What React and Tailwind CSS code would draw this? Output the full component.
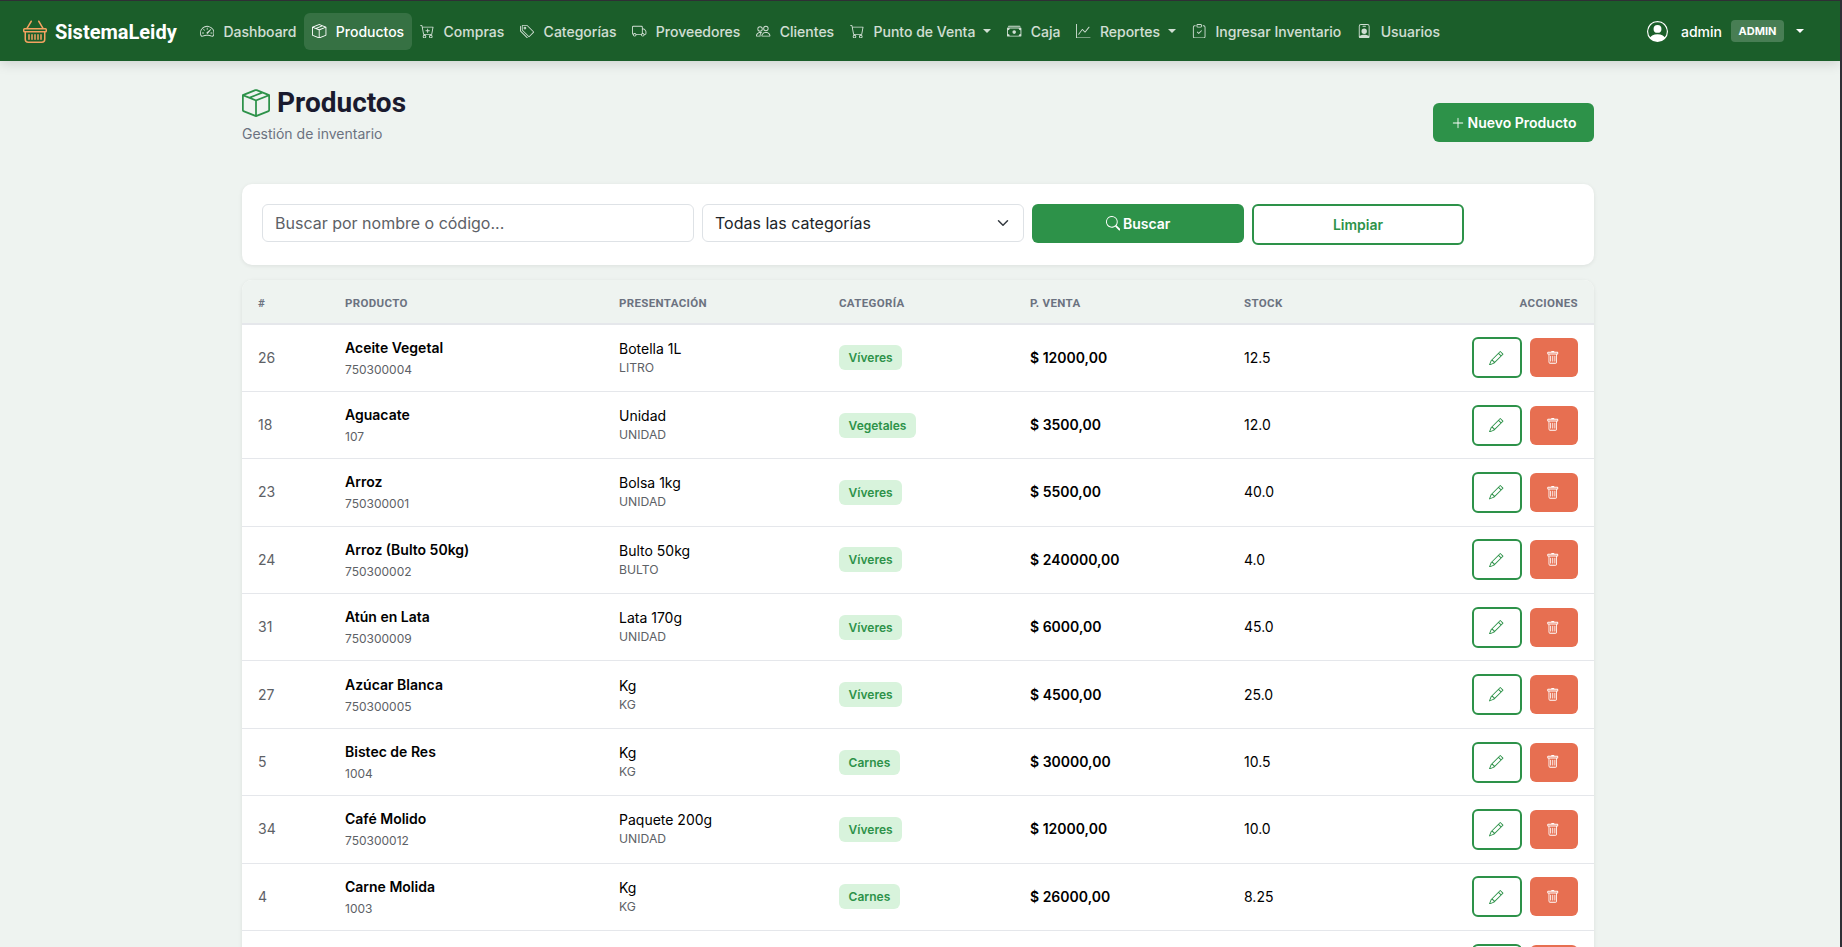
import React, { useState } from "react";
import {
  BsBasket,
  BsBoxSeam,
  BsCart,
  BsCartPlus,
  BsCashStack,
  BsClipboardCheck,
  BsGraphUp,
  BsPencil,
  BsPeople,
  BsPersonBadge,
  BsPersonCircle,
  BsPlusLg,
  BsSearch,
  BsSpeedometer2,
  BsTags,
  BsTrash,
  BsTruck,
} from "react-icons/bs";

const links = [
  { name: "Dashboard", icon: BsSpeedometer2 },
  { name: "Productos", icon: BsBoxSeam, active: true },
  { name: "Compras", icon: BsCartPlus },
  { name: "Categorías", icon: BsTags },
  { name: "Proveedores", icon: BsTruck },
  { name: "Clientes", icon: BsPeople },
  { name: "Punto de Venta", icon: BsCart, menu: true },
  { name: "Caja", icon: BsCashStack },
  { name: "Reportes", icon: BsGraphUp, menu: true },
  { name: "Ingresar Inventario", icon: BsClipboardCheck },
  { name: "Usuarios", icon: BsPersonBadge },
];

const products = [
  { id: 26, name: "Aceite Vegetal", code: "750300004", pres: "Botella 1L", unit: "LITRO", category: "Víveres", price: "12000,00", stock: "12.5" },
  { id: 18, name: "Aguacate", code: "107", pres: "Unidad", unit: "UNIDAD", category: "Vegetales", price: "3500,00", stock: "12.0" },
  { id: 23, name: "Arroz", code: "750300001", pres: "Bolsa 1kg", unit: "UNIDAD", category: "Víveres", price: "5500,00", stock: "40.0" },
  { id: 24, name: "Arroz (Bulto 50kg)", code: "750300002", pres: "Bulto 50kg", unit: "BULTO", category: "Víveres", price: "240000,00", stock: "4.0" },
  { id: 31, name: "Atún en Lata", code: "750300009", pres: "Lata 170g", unit: "UNIDAD", category: "Víveres", price: "6000,00", stock: "45.0" },
  { id: 27, name: "Azúcar Blanca", code: "750300005", pres: "Kg", unit: "KG", category: "Víveres", price: "4500,00", stock: "25.0" },
  { id: 5, name: "Bistec de Res", code: "1004", pres: "Kg", unit: "KG", category: "Carnes", price: "30000,00", stock: "10.5" },
  { id: 34, name: "Café Molido", code: "750300012", pres: "Paquete 200g", unit: "UNIDAD", category: "Víveres", price: "12000,00", stock: "10.0" },
  { id: 4, name: "Carne Molida", code: "1003", pres: "Kg", unit: "KG", category: "Carnes", price: "26000,00", stock: "8.25" },
];

const Caret = () => (
  <span className="ml-2 inline-block border-x-[4.3px] border-t-[4.3px] border-x-transparent border-t-current"></span>
);

const Navbar = () => {
  return (
    <nav className="relative z-10 flex h-[60px] items-center bg-[#1b5e2a] pl-[23px] pr-9 shadow-[0_2px_12px_rgba(0,0,0,0.15)]">
      <a className="flex items-center gap-2 text-white">
        <BsBasket className="size-6 text-[#f4a261]" />
        <span className="w-[121px] whitespace-nowrap pt-0.5 font-['Roboto',sans-serif] text-[20px] font-bold leading-6">SistemaLeidy</span>
      </a>
      <ul className="ml-4 flex items-center text-sm font-medium text-white/80">
        {links.map((link) => (
          <li key={link.name}>
            <a
              className={
                link.active
                  ? "flex h-[37px] items-center whitespace-nowrap rounded-md bg-white/12 px-2 text-white"
                  : "flex h-[37px] items-center whitespace-nowrap px-2"
              }
            >
              <link.icon className="mr-[9px] size-[14.4px]" />
              <span className="pt-0.5">{link.name}</span>
              {link.menu && <Caret />}
            </a>
          </li>
        ))}
      </ul>
      <div className="ml-auto flex items-center text-sm font-medium text-white">
        <BsPersonCircle className="mr-[13px] size-[21px]" />
        <span className="pt-0.5">admin</span>
        <span className="ml-[9px] mr-1 w-[53px] rounded bg-white/20 py-[3px] text-center text-[11px] font-bold leading-4">ADMIN</span>
        <Caret />
      </div>
    </nav>
  );
};

const RowButtons = () => (
  <div className="flex items-center justify-end gap-2">
    <button className="flex h-[41px] w-[50px] items-center justify-center rounded-md border-2 border-[#2d9249] text-[#2d9249]">
      <BsPencil className="mr-px size-[14.4px]" />
    </button>
    <button className="flex h-[39px] w-12 items-center justify-center rounded-md bg-[#e76f51] text-white">
      <BsTrash className="mr-0.5 size-[13.5px]" />
    </button>
  </div>
);

const ProductRow = ({ product }) => {
  return (
    <tr className="h-[67.4px] border-b border-[#e5e7eb]">
      <td className="px-4 text-[#5d6166]">{product.id}</td>
      <td className="px-4 pt-px">
        <div className="font-semibold leading-[22px]">{product.name}</div>
        <div className="text-xs leading-[21px] text-[#5d6166]">{product.code}</div>
      </td>
      <td className="px-4">
        <div className="leading-[19px]">{product.pres}</div>
        <div className="text-[12.2px] leading-[19px] text-[#5d6166]">{product.unit}</div>
      </td>
      <td className="px-4">
        <span className="inline-block rounded-md bg-[#d8f3dc] px-[9.6px] text-xs font-semibold leading-[25px] text-[#2d9249]">
          {product.category}
        </span>
      </td>
      <td className="px-4 font-semibold">$ {product.price}</td>
      <td className="px-4">{product.stock}</td>
      <td className="px-4">
        <RowButtons />
      </td>
    </tr>
  );
};

const App = () => {
  const [search, setSearch] = useState("");

  return (
    <div className="h-[947px] overflow-hidden border-r-2 border-t border-[#2f2f35] bg-[#eef3f0] font-['Inter',sans-serif]">
      <Navbar />
      <main className="ml-[242px] w-[1352px] text-sm text-black">
        <div className="flex h-[123px] items-start justify-between">
          <div className="pt-6">
            <h1 className="flex items-center gap-2 font-['Roboto',sans-serif] text-[28px] font-bold leading-[34px] text-[#1a1a2e]">
              <BsBoxSeam className="size-7 text-[#2d9249]" />
              <span className="-ml-px pt-px">Productos</span>
            </h1>
            <p className="mt-[3px] leading-[22px] text-[#6b7280]">Gestión de inventario</p>
          </div>
          <button className="mt-[42px] flex h-[39px] w-[161px] items-center justify-center rounded-md bg-[#2d9249] font-semibold text-white">
            <BsPlusLg className="mr-[3px] size-[14px]" />
            Nuevo Producto
          </button>
        </div>

        <div className="mb-[15px] flex h-[81px] items-start gap-2 rounded-[10px] bg-white p-5 shadow-[0_1px_4px_rgba(0,0,0,0.08)]">
          <input
            type="text"
            value={search}
            onChange={(e) => setSearch(e.target.value)}
            placeholder="Buscar por nombre o código..."
            className="h-[38px] w-[432px] rounded-md border border-[#dee2e6] px-3 text-base placeholder:text-[#5d6166]"
          />
          <div className="flex h-[38px] w-[322px] items-center justify-between rounded-md border border-[#dee2e6] pl-3 pr-[14px] text-base text-[#212529]">
            Todas las categorías
            <svg viewBox="0 0 16 16" className="h-3 w-3" fill="none" stroke="#343a40" strokeWidth="2" strokeLinecap="round" strokeLinejoin="round">
              <path d="m2 5 6 6 6-6" />
            </svg>
          </div>
          <button className="flex h-[39px] w-[212px] items-center justify-center gap-[3px] rounded-md bg-[#2d9249] font-semibold text-white">
            <BsSearch className="size-[14.4px]" />
            Buscar
          </button>
          <button className="h-[41px] w-[212px] rounded-md border-2 border-[#2d9249] font-semibold text-[#2d9249]">
            Limpiar
          </button>
        </div>

        <div className="overflow-hidden rounded-t-[10px] bg-white shadow-[0_1px_4px_rgba(0,0,0,0.08)]">
          <table className="w-full table-fixed border-collapse text-left">
            <thead>
              <tr className="h-[44px] border-b-2 border-[#e5e7eb] bg-[#eef3f0] font-['Roboto',sans-serif] text-[11.5px] uppercase tracking-[0.35px] text-[#6b7280]">
                <th className="w-[87px] px-4 pt-[3px] font-bold">#</th>
                <th className="w-[274px] px-4 pt-[3px] font-bold">Producto</th>
                <th className="w-[220px] px-4 pt-[3px] font-bold">Presentación</th>
                <th className="w-[191px] px-4 pt-[3px] font-bold">Categoría</th>
                <th className="w-[214px] px-4 pt-[3px] font-bold">P. Venta</th>
                <th className="w-[150px] px-4 pt-[3px] font-bold">Stock</th>
                <th className="px-4 pt-[3px] text-right font-bold">Acciones</th>
              </tr>
            </thead>
            <tbody>
              {products.map((product) => (
                <ProductRow key={product.id} product={product} />
              ))}
              <tr className="h-[67.4px]">
                <td colSpan={7} className="px-4">
                  <RowButtons />
                </td>
              </tr>
            </tbody>
          </table>
        </div>
      </main>
    </div>
  );
};

export default App;
